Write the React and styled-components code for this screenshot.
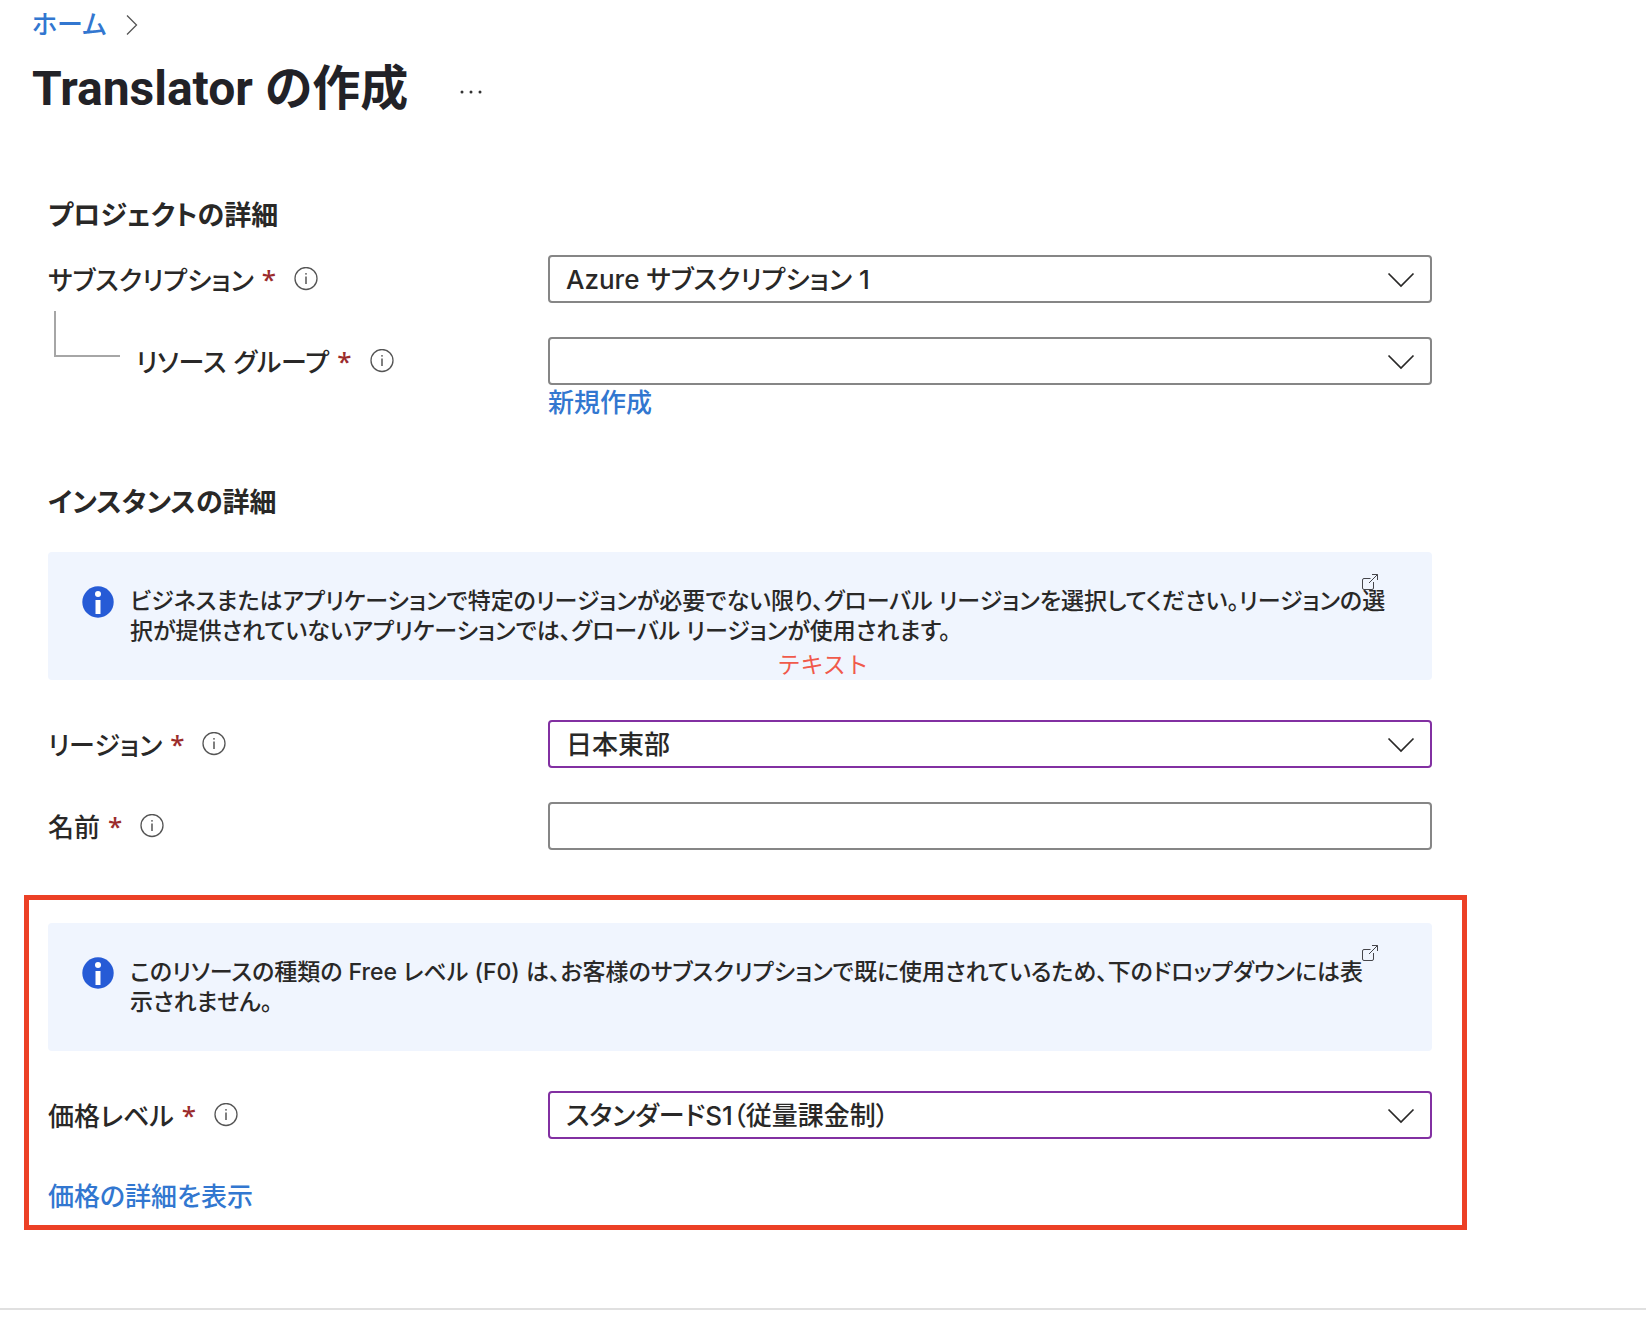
import React, {useState} from 'react';
import styled, {createGlobalStyle} from 'styled-components';

const GlobalStyle = createGlobalStyle`
  * {
    box-sizing: border-box;
  }

  body {
    margin: 0;
    background-color: #fff;
    color: #292827;
    font-family: Inter, "Noto Sans CJK JP", sans-serif;
    font-size: 26px;
    font-weight: 500;
    font-feature-settings: "palt";
  }
`

const Header = styled.header`
  padding: 7px 32px 0;
`

const Breadcrumb = styled.nav`
  display: flex;
  align-items: center;
  gap: 20px;
`

const TitleRow = styled.div`
  display: flex;
  align-items: center;
  gap: 52px;
  margin-top: 14px;
`

const Title = styled.h1`
  margin: 0;
  color: #222227;
  font-family: Roboto, "Noto Sans CJK JP", sans-serif;
  font-size: 48px;
  font-weight: 700;
  line-height: 64px;
`

const IconButton = styled.button`
  display: flex;
  padding: 0;
  border: none;
  background: none;
  cursor: pointer;
`

const MoreButton = styled(IconButton)`
  margin-top: 6px;
`

const TextLink = styled.a`
  color: #3277d0;
  line-height: 36px;
  text-decoration: none;

  &:hover {
    text-decoration: underline;
  }
`

const Form = styled.form`
  max-width: 1480px;
  padding: 75px 48px 0;
`

const SectionTitle = styled.h2`
  margin: ${(props) => (props.$spaced ? '62px 0 29px' : '0 0 19px')};
  font-size: 27px;
  font-weight: 600;
  line-height: 40px;
`

const Fields = styled.div`
  display: flex;
  flex-direction: column;
  gap: 34px;
`

const Field = styled.div`
  display: grid;
  grid-template-columns: 500px minmax(0, 1fr);
`

const LabelCell = styled.div`
  display: flex;
  align-items: center;
  height: 48px;
`

const Label = styled.label`
  line-height: 36px;
  padding-top: 4px;
`

const Required = styled.span`
  margin: 0 18px 0 8px;
  color: #9b2c2c;
  font-family: "Noto Sans", sans-serif;
`

const Elbow = styled.span`
  align-self: flex-start;
  flex: none;
  width: 66px;
  height: 46px;
  margin: -26px 16px 0 6px;
  border: solid #a6a6a6;
  border-width: 0 0 2px 2px;
`

const Control = styled.div`
  position: relative;
  display: flex;
  flex-direction: column;
  align-items: flex-start;
`

const SelectBox = styled.select`
  appearance: none;
  width: 100%;
  height: 48px;
  padding: 0 64px 0 16px;
  border: 2px solid ${(props) => (props.$changed ? '#8230a2' : '#868686')};
  border-radius: 4px;
  background-color: #fff;
  color: inherit;
  font: inherit;
  font-feature-settings: inherit;
`

const TextBox = styled.input`
  width: 100%;
  height: 48px;
  padding: 0 16px;
  border: 2px solid #868686;
  border-radius: 4px;
  color: inherit;
  font: inherit;
`

const SelectArrow = styled.svg`
  position: absolute;
  top: 17px;
  right: 17px;
  pointer-events: none;
`

const NoticeBox = styled.div`
  position: relative;
  display: flex;
  gap: 16px;
  min-height: 128px;
  margin-bottom: 40px;
  padding: 34px 40px 34px 34px;
  border-radius: 4px;
  background-color: #f0f5fe;
`

const NoticeIcon = styled.svg`
  flex: none;
`

const NoticeText = styled.p`
  margin: 0;
  font-size: 23px;
  line-height: 30px;
`

const OpenLink = styled.a`
  position: absolute;
  top: 22px;
  right: 54px;
  display: flex;
`

const Annotation = styled.span`
  position: absolute;
  bottom: 0;
  left: 56%;
  transform: translateX(-50%);
  color: #f05a4b;
  font-size: 23px;
  font-weight: 400;
  line-height: 30px;
  font-feature-settings: normal;
`

const Highlight = styled.section`
  margin: 45px -35px 0 -24px;
  padding: 23px 30px 10px 19px;
  border: 5px solid #ec4026;
`

const PriceLink = styled(TextLink)`
  display: inline-block;
  margin-top: 40px;
`

const Footer = styled.footer`
  height: 22px;
  margin-top: 78px;
  border-top: 2px solid #e0e0e0;
`

const InfoButton = ({label}) => (
    <IconButton type="button" aria-label={`${label} の情報`}>
      <svg width="24" height="24" viewBox="0 0 24 24" fill="none" stroke="#555">
        <circle cx="12" cy="11.5" r="11" strokeWidth="1.3"/>
        <path d="M12 9.5V17" strokeWidth="1.5"/>
        <circle cx="12" cy="6.8" r="0.9" fill="#555" stroke="none"/>
      </svg>
    </IconButton>
)

const Notice = ({children, note}) => (
    <NoticeBox>
      <NoticeIcon width="32" height="32" viewBox="0 0 32 32">
        <circle cx="16" cy="16" r="15.7" fill="#265bd6"/>
        <circle cx="16" cy="8" r="3" fill="#fff"/>
        <path d="M13.5 14H18.5V28H13.5Z" fill="#fff"/>
      </NoticeIcon>
      <NoticeText>{children}</NoticeText>
      <OpenLink href="#" aria-label="詳細を開く">
        <svg width="16" height="16" viewBox="0 0 16 16" fill="none" stroke="#45454a" strokeWidth="1">
          <path d="M8.5 4.5H2Q0.5 4.5 0.5 6V14Q0.5 15.5 2 15.5H10Q11.5 15.5 11.5 14V8"/>
          <path d="M10 0.5H15.5V6M15.5 0.5L7 9"/>
        </svg>
      </OpenLink>
      {note && <Annotation>{note}</Annotation>}
    </NoticeBox>
)

const FormField = ({id, label, nested, children}) => (
    <Field>
      <LabelCell>
        {nested && <Elbow/>}
        <Label htmlFor={id}>{label}</Label>
        <Required>*</Required>
        <InfoButton label={label}/>
      </LabelCell>
      <Control>{children}</Control>
    </Field>
)

const Dropdown = ({id, options, changed}) => {
  const [value, setValue] = useState(options[0]);
  return (
      <>
        <SelectBox id={id} $changed={changed} value={value} onChange={(e) => setValue(e.target.value)}>
          {options.map((option) => <option key={option} value={option}>{option}</option>)}
        </SelectBox>
        <SelectArrow width="28" height="16" viewBox="0 0 28 16" fill="none" stroke="#292827" strokeWidth="1.7">
          <path d="M1.5 1.5L14 14L26.5 1.5"/>
        </SelectArrow>
      </>
  );
}

const App = () => {
  return (
      <>
        <GlobalStyle/>
        <Header>
          <Breadcrumb>
            <TextLink href="#">ホーム</TextLink>
            <svg width="12" height="20" viewBox="0 0 12 20" fill="none" stroke="#555" strokeWidth="1.3">
              <path d="M1 0.5L10.5 10L1 19.5"/>
            </svg>
          </Breadcrumb>
          <TitleRow>
            <Title>Translator の作成</Title>
            <MoreButton type="button" aria-label="その他">
              <svg width="22" height="4" viewBox="0 0 22 4" fill="#333">
                <circle cx="2" cy="2" r="1.5"/>
                <circle cx="11" cy="2" r="1.5"/>
                <circle cx="20" cy="2" r="1.5"/>
              </svg>
            </MoreButton>
          </TitleRow>
        </Header>
        <Form>
          <SectionTitle>プロジェクトの詳細</SectionTitle>
          <Fields>
            <FormField id="subscription" label="サブスクリプション">
              <Dropdown id="subscription" options={['Azure サブスクリプション 1']}/>
            </FormField>
            <FormField id="group" label="リソース グループ" nested>
              <Dropdown id="group" options={['']}/>
              <TextLink href="#">新規作成</TextLink>
            </FormField>
          </Fields>

          <SectionTitle $spaced>インスタンスの詳細</SectionTitle>
          <Notice note="テキスト">
            ビジネスまたはアプリケーションで特定のリージョンが必要でない限り、グローバル リージョンを選択してください。リージョンの選択が提供されていないアプリケーションでは、グローバル リージョンが使用されます。
          </Notice>
          <Fields>
            <FormField id="region" label="リージョン">
              <Dropdown id="region" options={['日本東部']} changed/>
            </FormField>
            <FormField id="name" label="名前">
              <TextBox id="name" type="text"/>
            </FormField>
          </Fields>

          <Highlight>
            <Notice>
              このリソースの種類の Free レベル (F0) は、お客様のサブスクリプションで既に使用されているため、下のドロップダウンには表<br/>
              示されません。
            </Notice>
            <FormField id="price" label="価格レベル">
              <Dropdown id="price" options={['スタンダードS1（従量課金制）']} changed/>
            </FormField>
            <PriceLink href="#">価格の詳細を表示</PriceLink>
          </Highlight>
        </Form>
        <Footer/>
      </>
  );
};


export default App;
